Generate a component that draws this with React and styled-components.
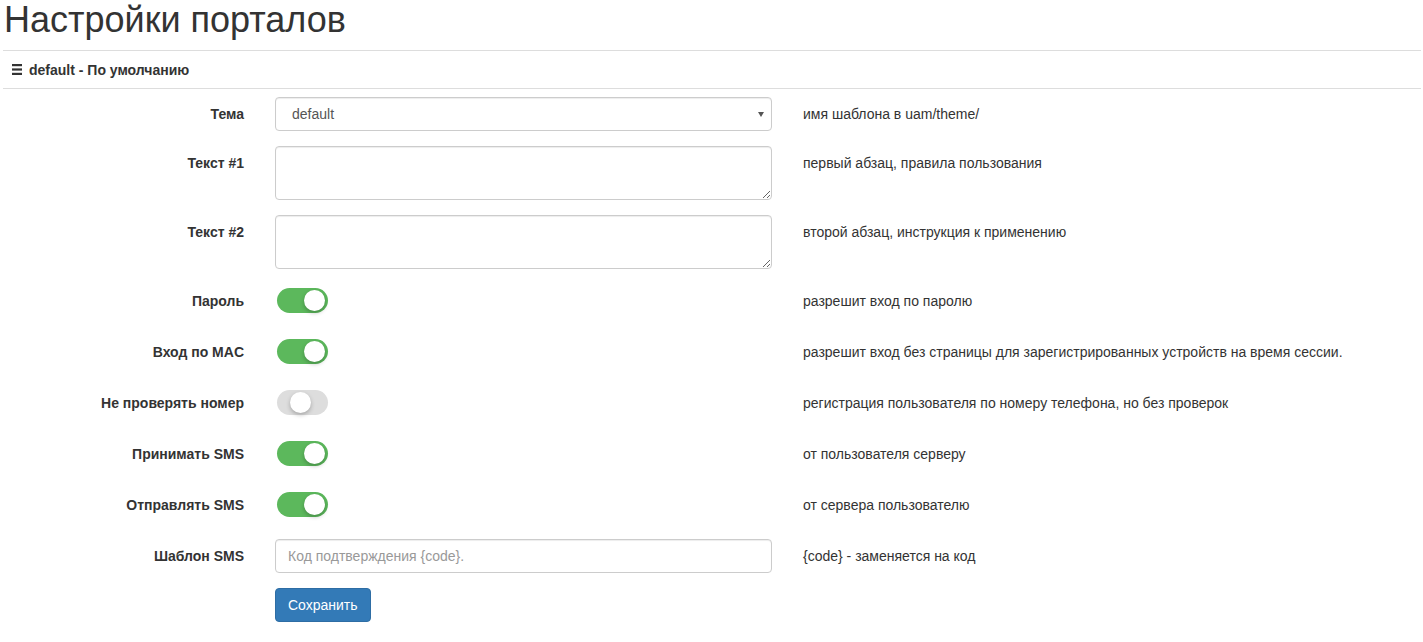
import React, { useState } from "react";
import styled, { createGlobalStyle } from "styled-components";

const GlobalStyle = createGlobalStyle`
  * { box-sizing: border-box; }
  body {
    margin: 0;
    background: #fff;
    color: #333;
    font-family: "Liberation Sans", Arial, Helvetica, sans-serif;
    font-size: 14px;
    line-height: 20px;
  }
`;

const Page = styled.div`
  padding: 0 2px 0 3px;
`;

const Title = styled.h1`
  margin: 0 0 10px 1px;
  font-size: 36px;
  line-height: 40px;
  font-weight: normal;
  color: #333;
`;

const PanelHeader = styled.div`
  display: flex;
  align-items: center;
  gap: 7px;
  height: 39px;
  padding: 0 9px;
  border-top: 1px solid #ddd;
  border-bottom: 1px solid #ddd;
  font-size: 14px;
  font-weight: bold;
`;

const Form = styled.form`
  padding-top: 8px;
`;

const Row = styled.div`
  display: grid;
  grid-template-columns: 241px 497px 1fr;
  column-gap: 31px;
  margin-bottom: 15px;
`;

const Label = styled.label`
  text-align: right;
  padding-top: 7px;
  font-weight: bold;
`;

const Help = styled.div`
  padding-top: 7px;
`;

const SelectBox = styled.div`
  position: relative;
  height: 34px;
  &::after {
    content: "";
    position: absolute;
    right: 8px;
    top: 15px;
    border-left: 3px solid transparent;
    border-right: 3px solid transparent;
    border-top: 5px solid #555;
    pointer-events: none;
  }
`;

const Select = styled.select`
  width: 100%;
  height: 34px;
  padding: 6px 12px 6px 16px;
  border: 1px solid #ccc;
  border-radius: 4px;
  background: #fff;
  color: #555;
  font: inherit;
  appearance: none;
  box-shadow: inset 0 1px 1px rgba(0, 0, 0, 0.075);
  outline: none;
`;

const TextArea = styled.textarea`
  display: block;
  width: 100%;
  height: 54px;
  padding: 6px 12px;
  border: 1px solid #ccc;
  border-radius: 4px;
  color: #555;
  font: inherit;
  resize: vertical;
  box-shadow: inset 0 1px 1px rgba(0, 0, 0, 0.075);
  outline: none;
`;

const Input = styled.input`
  width: 100%;
  height: 34px;
  padding: 6px 12px;
  border: 1px solid #ccc;
  border-radius: 4px;
  color: #555;
  font: inherit;
  box-shadow: inset 0 1px 1px rgba(0, 0, 0, 0.075);
  outline: none;
  &::placeholder {
    color: #999;
  }
`;

const SwitchCell = styled.div`
  height: 36px;
  padding: 4px 0 0 2px;
`;

const Switch = styled.button`
  position: relative;
  display: block;
  width: 51px;
  height: 25px;
  padding: 0;
  border: none;
  border-radius: 13px;
  background: ${(p) => (p.$on ? "#5cb85c" : "#ddd")};
  cursor: pointer;
  outline: none;
`;

const Knob = styled.span`
  position: absolute;
  top: 2px;
  left: ${(p) => (p.$on ? "27px" : "13px")};
  width: 21px;
  height: 21px;
  border-radius: 50%;
  background: #fff;
  box-shadow: 0 2px 4px rgba(0, 0, 0, 0.25);
`;

const SaveButton = styled.button`
  justify-self: start;
  height: 34px;
  padding: 6px 12px;
  border: 1px solid #2e6da4;
  border-radius: 4px;
  background: #337ab7;
  color: #fff;
  font: inherit;
  cursor: pointer;
`;

const MenuIcon = () => (
  <svg width="10" height="11" viewBox="0 0 10 11">
    <rect x="0" y="0" width="10" height="2.2" fill="#333" />
    <rect x="0" y="4.4" width="10" height="2.2" fill="#333" />
    <rect x="0" y="8.8" width="10" height="2.2" fill="#333" />
  </svg>
);

const switches = [
  { key: "password", label: "Пароль", help: "разрешит вход по паролю", on: true },
  { key: "mac", label: "Вход по MAC", help: "разрешит вход без страницы для зарегистрированных устройств на время сессии.", on: true },
  { key: "nocheck", label: "Не проверять номер", help: "регистрация пользователя по номеру телефона, но без проверок", on: false },
  { key: "smsIn", label: "Принимать SMS", help: "от пользователя серверу", on: true },
  { key: "smsOut", label: "Отправлять SMS", help: "от сервера пользователю", on: true },
];

export default function App() {
  const [flags, setFlags] = useState(
    Object.fromEntries(switches.map((s) => [s.key, s.on]))
  );
  const toggle = (key) => setFlags((f) => ({ ...f, [key]: !f[key] }));

  return (
    <Page>
      <GlobalStyle />
      <Title>Настройки порталов</Title>
      <PanelHeader>
        <MenuIcon />
        <span>default - По умолчанию</span>
      </PanelHeader>
      <Form onSubmit={(e) => e.preventDefault()}>
        <Row>
          <Label>Тема</Label>
          <SelectBox>
            <Select defaultValue="default">
              <option value="default">default</option>
            </Select>
          </SelectBox>
          <Help>имя шаблона в uam/theme/</Help>
        </Row>
        <Row>
          <Label>Текст #1</Label>
          <TextArea />
          <Help>первый абзац, правила пользования</Help>
        </Row>
        <Row>
          <Label>Текст #2</Label>
          <TextArea />
          <Help>второй абзац, инструкция к применению</Help>
        </Row>
        {switches.map((s) => (
          <Row key={s.key}>
            <Label>{s.label}</Label>
            <SwitchCell>
              <Switch
                type="button"
                role="switch"
                aria-checked={flags[s.key]}
                $on={flags[s.key]}
                onClick={() => toggle(s.key)}
              >
                <Knob $on={flags[s.key]} />
              </Switch>
            </SwitchCell>
            <Help>{s.help}</Help>
          </Row>
        ))}
        <Row>
          <Label>Шаблон SMS</Label>
          <Input placeholder="Код подтверждения {code}." />
          <Help>{"{code} - заменяется на код"}</Help>
        </Row>
        <Row>
          <span />
          <SaveButton type="submit">Сохранить</SaveButton>
        </Row>
      </Form>
    </Page>
  );
}
